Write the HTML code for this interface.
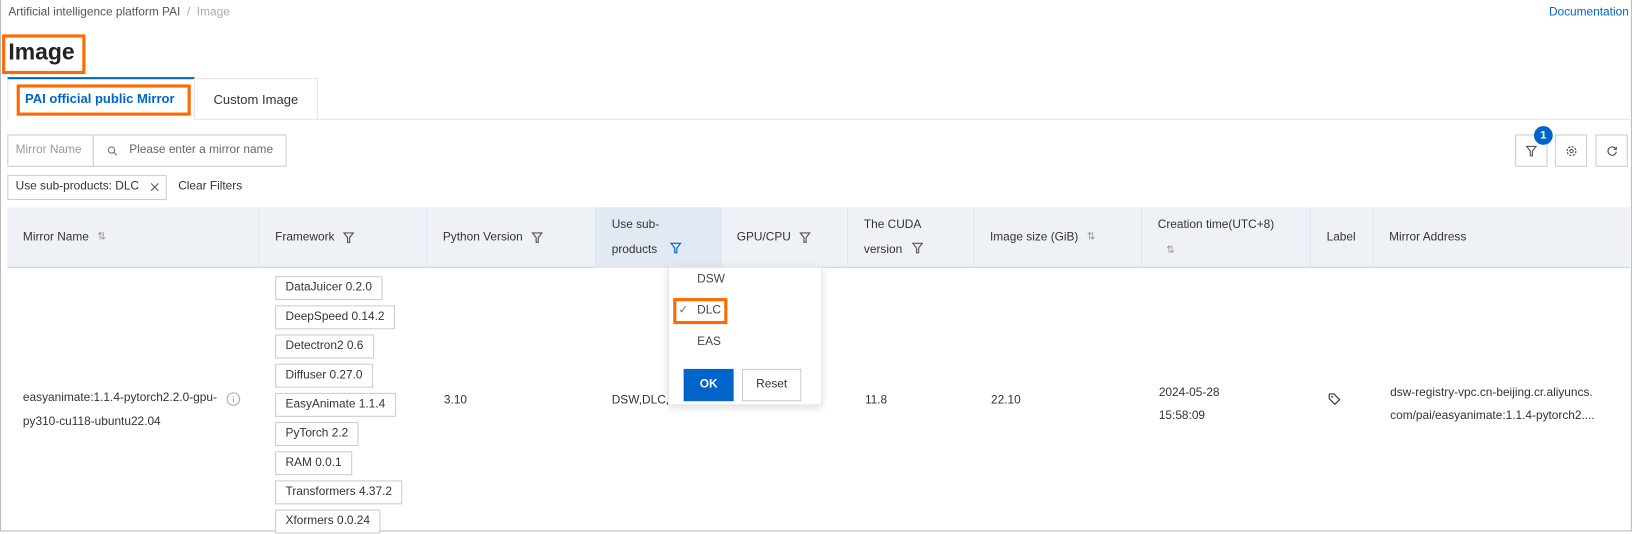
<!DOCTYPE html>
<html><head><meta charset="utf-8"><style>
*{box-sizing:border-box;margin:0;padding:0}
body{width:1634px;height:531px;overflow:hidden;background:#fff;font-family:"Liberation Sans",sans-serif;font-size:11.4px;color:#333}
#w{position:absolute;left:0;top:0;width:1568px;height:510px;transform:scale(1.0421);transform-origin:0 0}
.frame{position:absolute;left:0;top:0;width:1566px;height:510px;border:1px solid #bbb;border-top:none}
.a{position:absolute;white-space:nowrap}
.hc{position:absolute;top:199px;height:58px;display:flex;align-items:center;padding-left:15px;color:#333;border-right:1px solid #dbe3ee;line-height:24px}
.tag{position:absolute;left:264px;height:23px;border:1px solid #ccc;padding:0 9px;line-height:21px;color:#333;background:#fff}
.fi{display:inline-block;width:11px;height:12px;margin-left:8px;vertical-align:middle}
.btn{position:absolute;top:129px;width:31px;height:31px;border:1px solid #ccc;background:#fff;display:flex;align-items:center;justify-content:center}
.orange{position:absolute;border:3px solid #ff6a00}
</style></head><body><div id="w">
<div class="frame"></div>
<div class="a" style="left:8px;top:6px;color:#555">Artificial intelligence platform PAI &nbsp;<span style="color:#aaa">/ &nbsp;Image</span></div>
<div class="a" style="right:5px;top:6px;color:#0064c8">Documentation</div>
<div class="a" style="left:8px;top:37px;font-size:22px;font-weight:bold;color:#222">Image</div>
<div class="orange" style="left:2px;top:33px;width:80px;height:38px"></div>
<div style="position:absolute;left:7px;top:114px;width:1557px;height:1px;background:#e3e3e3"></div>
<div style="position:absolute;left:7px;top:74px;width:180px;height:41px;border-top:2px solid #0064c8;border-left:1px solid #e3e3e3;background:#fff"></div>
<div style="position:absolute;left:186px;top:75px;width:119px;height:40px;border:1px solid #e3e3e3;border-bottom:none;text-align:center;line-height:40px;font-size:12.5px;color:#333">Custom Image</div>
<div class="a" style="left:24px;top:88px;font-size:12.5px;color:#0064c8;font-weight:bold">PAI official public Mirror</div>
<div class="orange" style="left:16px;top:81px;width:167px;height:30px"></div>
<div style="position:absolute;left:7px;top:129px;width:268px;height:31px;border:1px solid #ccc"></div>
<div style="position:absolute;left:89px;top:129px;width:1px;height:31px;background:#ccc"></div>
<div class="a" style="left:15px;top:138px;color:#999">Mirror Name</div>
<svg style="position:absolute;left:103px;top:140px" width="10" height="10" viewBox="0 0 10 10"><circle cx="4" cy="4" r="3" fill="none" stroke="#777" stroke-width="1.1"/><path d="M6.3 6.3L9 9" stroke="#777" stroke-width="1.1"/></svg>
<div class="a" style="left:124px;top:138px;color:#666">Please enter a mirror name</div>
<div style="position:absolute;left:7px;top:168px;width:153px;height:24px;border:1px solid #ccc"></div>
<div class="a" style="left:15px;top:173px;color:#333">Use sub-products: DLC</div>
<svg style="position:absolute;left:144px;top:175px" width="9" height="9" viewBox="0 0 9 9"><path d="M1 1l7 7M8 1L1 8" stroke="#666" stroke-width="1.1"/></svg>
<div class="a" style="left:171px;top:173px;color:#333">Clear Filters</div>
<div class="btn" style="left:1454px"><svg width="11" height="12" viewBox="0 0 11 12"><path d="M1 1.5h9L6.5 6v4.5h-2V6z" fill="none" stroke="#555" stroke-width="1.1"/></svg></div>
<div style="position:absolute;left:1472px;top:121px;width:18px;height:18px;border-radius:50%;background:#0064c8;color:#fff;font-size:11px;font-weight:bold;text-align:center;line-height:18px">1</div>
<div class="btn" style="left:1492px"><svg width="12" height="12" viewBox="0 0 12 12"><circle cx="6" cy="6" r="4.2" fill="none" stroke="#555" stroke-width="1.2" stroke-dasharray="2 1.3"/><circle cx="6" cy="6" r="1.6" fill="none" stroke="#555"/></svg></div>
<div class="btn" style="left:1531px"><svg width="12" height="12" viewBox="0 0 12 12"><path d="M9.5 4A4 4 0 1 0 10 6.5" fill="none" stroke="#555" stroke-width="1.1"/><path d="M10 1.8V4.3H7.5" fill="none" stroke="#555" stroke-width="1.1"/></svg></div>
<div style="position:absolute;left:7px;top:199px;width:1557px;height:58px;background:#eef2f7;border-bottom:1px solid #ccd3dd"></div>
<div style="position:absolute;left:572px;top:199px;width:120px;height:58px;background:#e2e9f3"></div>
<div class="hc" style="left:7px;width:242px">Mirror Name <span style="color:#999;margin-left:8px;font-size:10px">⇅</span></div>
<div class="hc" style="left:249px;width:161px">Framework<svg class="fi" viewBox="0 0 11 12"><path d="M1 1.5h9L6.5 6v4.5h-2V6z" fill="none" stroke="#555" stroke-width="1.1"/></svg></div>
<div class="hc" style="left:410px;width:162px">Python Version<svg class="fi" viewBox="0 0 11 12"><path d="M1 1.5h9L6.5 6v4.5h-2V6z" fill="none" stroke="#555" stroke-width="1.1"/></svg></div>
<div class="hc" style="left:572px;width:120px"><div>Use sub-<br>products</div></div>
<svg class="fi" style="position:absolute;left:643px;top:232px;margin:0" viewBox="0 0 11 12"><path d="M1 1.5h9L6.5 6v4.5h-2V6z" fill="none" stroke="#0064c8" stroke-width="1.1"/></svg>
<div class="hc" style="left:692px;width:122px">GPU/CPU<svg class="fi" viewBox="0 0 11 12"><path d="M1 1.5h9L6.5 6v4.5h-2V6z" fill="none" stroke="#555" stroke-width="1.1"/></svg></div>
<div class="hc" style="left:814px;width:121px"><div>The CUDA<br>version</div></div>
<svg class="fi" style="position:absolute;left:875px;top:232px;margin:0" viewBox="0 0 11 12"><path d="M1 1.5h9L6.5 6v4.5h-2V6z" fill="none" stroke="#555" stroke-width="1.1"/></svg>
<div class="hc" style="left:935px;width:161px">Image size (GiB) <span style="color:#999;margin-left:8px;font-size:10px">⇅</span></div>
<div class="hc" style="left:1096px;width:162px"><div>Creation time(UTC+8)<br><span style="color:#999;font-size:10px;padding-left:8px">⇅</span></div></div>
<div class="hc" style="left:1258px;width:60px">Label</div>
<div class="hc" style="left:1318px;width:246px;border-right:none">Mirror Address</div>
<div class="a" style="left:22px;top:371px;line-height:23px">easyanimate:1.1.4-pytorch2.2.0-gpu-<br>py310-cu118-ubuntu22.04</div>
<svg style="position:absolute;left:217px;top:376px" width="14" height="14" viewBox="0 0 14 14"><circle cx="7" cy="7" r="6" fill="none" stroke="#aaa"/><path d="M7 6v4M7 4v1" stroke="#aaa"/></svg>
<div class="tag" style="top:265px">DataJuicer 0.2.0</div>
<div class="tag" style="top:293px">DeepSpeed 0.14.2</div>
<div class="tag" style="top:321px">Detectron2 0.6</div>
<div class="tag" style="top:349px">Diffuser 0.27.0</div>
<div class="tag" style="top:377px">EasyAnimate 1.1.4</div>
<div class="tag" style="top:405px">PyTorch 2.2</div>
<div class="tag" style="top:433px">RAM 0.0.1</div>
<div class="tag" style="top:461px">Transformers 4.37.2</div>
<div class="tag" style="top:489px">Xformers 0.0.24</div>
<div class="a" style="left:426px;top:378px">3.10</div>
<div class="a" style="left:587px;top:378px">DSW,DLC,EAS</div>
<div class="a" style="left:830px;top:378px">11.8</div>
<div class="a" style="left:951px;top:378px">22.10</div>
<div class="a" style="left:1112px;top:366px;line-height:22px">2024-05-28<br>15:58:09</div>
<svg style="position:absolute;left:1274px;top:376px" width="13" height="13" viewBox="0 0 13 13"><path d="M1.5 2.5v4l5.5 5.5 4.5-4.5-5.5-5.5h-4z" fill="none" stroke="#333" stroke-width="1.1"/><circle cx="4.3" cy="4.8" r=".9" fill="#333"/></svg>
<div class="a" style="left:1334px;top:366px;line-height:22px">dsw-registry-vpc.cn-beijing.cr.aliyuncs.<br>com/pai/easyanimate:1.1.4-pytorch2....</div>
<svg style="position:absolute;left:1601px;top:388px" width="11" height="11" viewBox="0 0 11 11"><rect x="3" y="1" width="7" height="7" fill="none" stroke="#777"/><path d="M1 3v7h7" fill="none" stroke="#777"/></svg>
<div style="position:absolute;left:641px;top:256px;width:148px;height:133px;background:#fff;border:1px solid #e5e5e5;box-shadow:0 2px 8px rgba(0,0,0,.15)"></div>
<div class="a" style="left:669px;top:262px;color:#444">DSW</div>
<div class="a" style="left:651px;top:290px;color:#777">✓</div>
<div class="a" style="left:669px;top:292px;color:#444">DLC</div>
<div class="orange" style="left:646px;top:286px;width:52px;height:25px"></div>
<div class="a" style="left:669px;top:322px;color:#444">EAS</div>
<div style="position:absolute;left:656px;top:354px;width:48px;height:31px;background:#0064c8;color:#fff;font-weight:bold;text-align:center;line-height:31px">OK</div>
<div style="position:absolute;left:712px;top:354px;width:57px;height:31px;border:1px solid #ccc;color:#333;text-align:center;line-height:29px">Reset</div>
</div></body></html>
